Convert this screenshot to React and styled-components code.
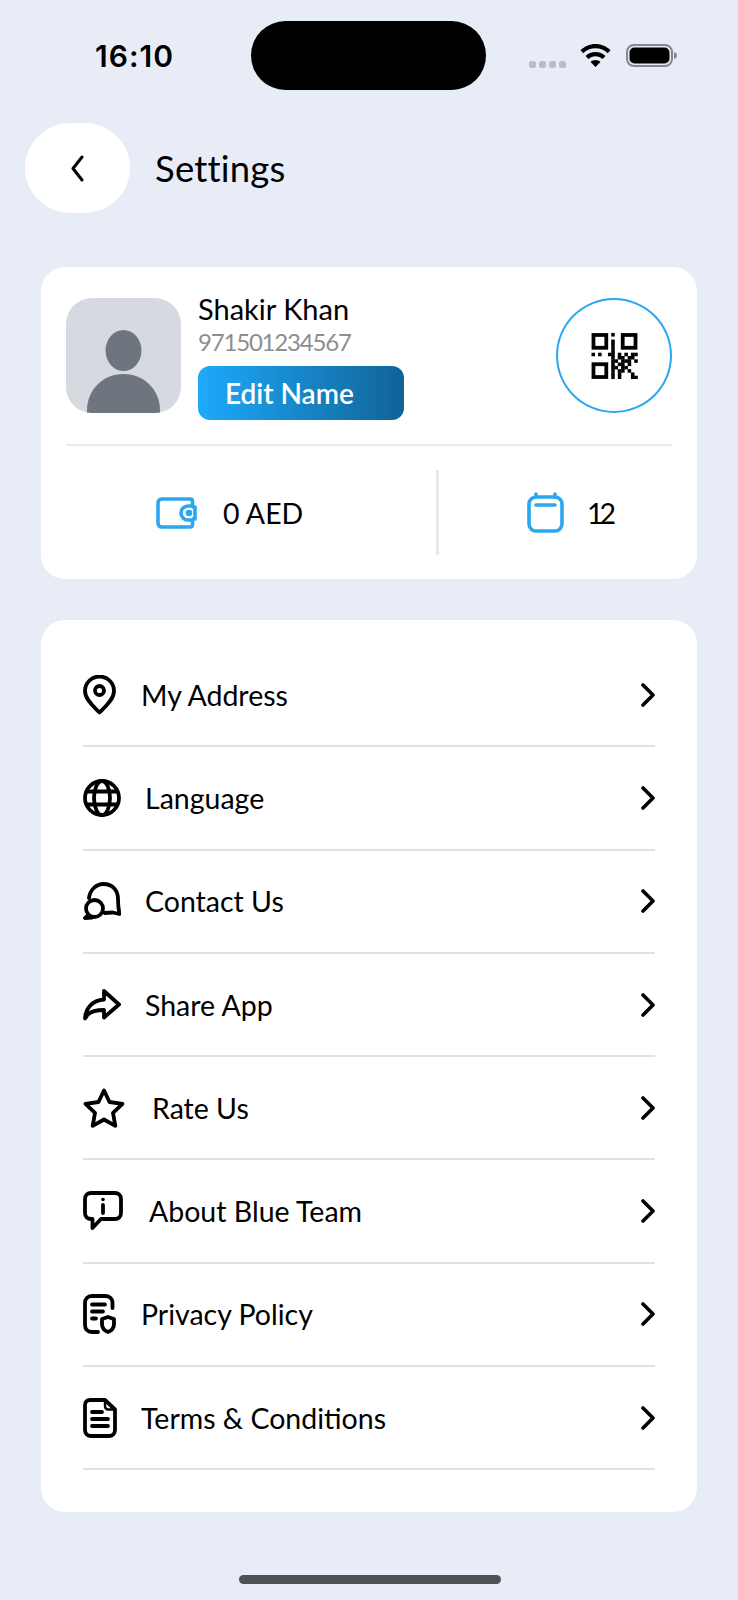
import React from "react";
import styled, { createGlobalStyle } from "styled-components";

const GlobalStyle = createGlobalStyle`
  html, body {
    margin: 0;
    padding: 0;
    background: #e7ecf7;
  }
  * {
    box-sizing: border-box;
  }
`;

const Page = styled.div`
  position: relative;
  width: 738px;
  height: 1600px;
  overflow: hidden;
  background: #e7ecf7;
  font-family: Lato, "Noto Sans", sans-serif;
  color: #000;
`;

const StatusBar = styled.div`
  display: flex;
  align-items: center;
  height: 69px;
  margin-top: 21px;
  padding-left: 95px;
`;

const Time = styled.div`
  width: 156px;
  font-family: Inter, sans-serif;
  font-size: 30px;
  font-weight: 600;
  letter-spacing: 1px;
`;

const Island = styled.div`
  width: 235px;
  height: 69px;
  border-radius: 35px;
  background: #000;
`;

const StatusIcons = styled.div`
  display: flex;
  align-items: center;
  height: 24px;
  margin-left: 43px;
`;

const DotsSlot = styled.div`
  display: flex;
  align-self: flex-end;
  margin-right: 14px;
`;

const WifiSlot = styled.div`
  display: flex;
  margin-right: 15px;
`;

const Header = styled.div`
  display: flex;
  align-items: center;
  gap: 25px;
  margin-top: 33px;
  padding-left: 25px;
`;

const BackButton = styled.div`
  display: flex;
  align-items: center;
  justify-content: center;
  width: 105px;
  height: 90px;
  border-radius: 45px;
  background: #fff;
`;

const Title = styled.div`
  font-size: 36.5px;
  letter-spacing: 0.2px;
`;

const Card = styled.div`
  margin: ${(p) => p.$top}px 41px 0;
  background: #fff;
  border-radius: 24px;
`;

const ProfileCard = styled(Card)`
  height: 312px;
  padding: 31px 25px 0;
`;

const ProfileTop = styled.div`
  display: flex;
  height: 148px;
  border-bottom: 2px solid #e9ebef;
`;

const Avatar = styled.div`
  width: 115px;
  height: 115px;
  border-radius: 26px;
  background: #d6dae0;
  overflow: hidden;
  flex: none;
`;

const ProfileInfo = styled.div`
  display: flex;
  flex-direction: column;
  align-items: flex-start;
  margin-left: 17px;
  flex: 1;
`;

const Name = styled.div`
  font-size: 29px;
  line-height: 26px;
  margin-top: -2px;
`;

const Phone = styled.div`
  font-size: 24px;
  line-height: 28px;
  margin-top: 6px;
  letter-spacing: -1.2px;
  color: #8e8e8e;
`;

const EditButton = styled.div`
  display: flex;
  align-items: center;
  width: 206px;
  height: 54px;
  margin-top: 10px;
  padding-left: 27px;
  border-radius: 12px;
  background: linear-gradient(90deg, #1fa9fb 0%, #0f6397 100%);
  color: #fff;
  font-size: 28px;
  font-weight: 600;
`;

const QrCircle = styled.div`
  display: flex;
  align-items: center;
  justify-content: center;
  width: 116px;
  height: 115px;
  border: 2px solid #2aa7ef;
  border-radius: 50%;
  flex: none;
`;

const Stats = styled.div`
  display: flex;
  align-items: center;
  height: 85px;
  margin-top: 24px;
`;

const Stat = styled.div`
  display: flex;
  align-items: center;
  gap: ${(p) => p.$gap}px;
  height: 100%;
  width: ${(p) => p.$width}px;
  padding-left: ${(p) => p.$pad}px;
  font-size: 28.5px;
  letter-spacing: ${(p) => (p.$right ? "-4px" : "0")};
  border-right: ${(p) => (p.$right ? "none" : "3px solid #e6e8ec")};
`;

const MenuCard = styled(Card)`
  height: 892px;
  padding: 24px 42px 0;
`;

const Row = styled.div`
  display: flex;
  align-items: center;
  height: 103.3px;
  border-bottom: 2px solid #dfe1e5;
  font-size: 28.5px;
  gap: ${(p) => p.$gap}px;
`;

const RowLabel = styled.div`
  flex: 1;
`;

const HomeBar = styled.div`
  position: absolute;
  left: 239px;
  bottom: 16px;
  width: 262px;
  height: 9px;
  border-radius: 5px;
  background: #505154;
`;

const Ico = ({ w, h, children }) => (
  <svg
    width={w}
    height={h}
    viewBox={`0 0 ${w} ${h}`}
    fill="none"
    stroke="#000"
    strokeWidth="3.8"
    strokeLinecap="round"
    strokeLinejoin="round"
    style={{ flex: "none" }}
  >
    {children}
  </svg>
);

const PinIcon = () => (
  <Ico w={33} h={40}>
    <path d="M16.5 37.5C11 32 2 24.5 2 16a14.5 14.5 0 0 1 29 0c0 8.5-9 16-14.5 21.5Z" />
    <circle cx="16.5" cy="15.5" r="4.5" />
  </Ico>
);

const GlobeIcon = () => (
  <Ico w={38} h={38}>
    <circle cx="19" cy="19" r="17" />
    <ellipse cx="19" cy="19" rx="8" ry="17" />
    <path d="M4 12.5h30M4 25.5h30" />
  </Ico>
);

const ChatIcon = () => (
  <Ico w={38} h={38}>
    <path d="M6 16C7 8 13 2 20.5 2 29.5 2 35 8.500 35 17c0 5 .5 10 1.500 15l-7-1.500-8 .5" />
    <circle cx="11.500" cy="26.500" r="8.500" />
    <path d="M5 33l-3 3 7-.5" />
  </Ico>
);

const ShareIcon = () => (
  <Ico w={38} h={32}>
    <path d="M21 2l15 13.500L21 28.500V21c-7 0-12.500 1-16 4.500-1 1-2 3-3 4 .5-10 7-18 19-19V2Z" />
  </Ico>
);

const StarIcon = () => (
  <Ico w={42} h={40}>
    <path d="M21 2.500l5.500 11.500 13 1.800-9.500 9 2.300 13L21 31.500 9.700 37.800l2.300-13-9.500-9 13-1.800L21 2.500Z" />
  </Ico>
);

const InfoIcon = () => (
  <Ico w={40} h={40}>
    <path d="M8 2h24c3.500 0 6 2.500 6 6v14c0 3.500-2.500 6-6 6H18l-8.500 9v-9H8c-3.500 0-6-2.500-6-6V8c0-3.500 2.500-6 6-6Z" />
    <path d="M20 14v8" />
    <circle cx="20" cy="8.500" r="1.800" fill="#000" stroke="none" />
  </Ico>
);

const PolicyIcon = () => (
  <Ico w={34} h={40}>
    <path d="M29.500 14V9c0-4-2.500-7-7-7H9C4.500 2 2 5 2 9v22c0 4 2.500 7 7 7h6" />
    <path d="M9 10.500h13M9 17.500h11M9 24.500h4" />
    <path d="M25 38c-4-1.500-6-4-6-8v-5l6-2 6 2v5c0 4-2 6.500-6 8Z" />
  </Ico>
);

const TermsIcon = () => (
  <Ico w={34} h={40}>
    <path d="M7 2h15l10 9.500V32c0 3.500-2.500 6-6 6H8c-3.500 0-6-2.500-6-6V7c0-3 2-5 5-5Z" />
    <path d="M22 3v5c0 2 1.500 3.500 3.500 3.500H31" strokeWidth="2.400" />
    <path d="M9 14h10M9 21h16M9 28h16" />
  </Ico>
);

const ArrowRight = () => (
  <svg width="14" height="24" viewBox="0 0 14 24" fill="none" stroke="#000" strokeWidth="3.6" strokeLinecap="round" strokeLinejoin="round">
    <path d="M2 2l10 10L2 22" />
  </svg>
);

const ArrowLeft = () => (
  <svg width="13" height="27" viewBox="0 0 13 27" fill="none" stroke="#000" strokeWidth="3" strokeLinecap="round" strokeLinejoin="round">
    <path d="M11 2L2 13.500 11 25" />
  </svg>
);

const WalletIcon = () => (
  <svg width="41" height="32" viewBox="0 0 41 32" fill="none" stroke="#2aa7ef" strokeWidth="3.6" strokeLinejoin="round">
    <path d="M6 2h28c1.500 0 2.500 1 2.500 2.500V9H32a7 7 0 0 0 0 14h4.500v4.500c0 1.500-1 2.500-2.500 2.500H6c-2.500 0-4-1.500-4-4V6c0-2.500 1.500-4 4-4Z" />
    <circle cx="33" cy="16" r="1.500" fill="#2aa7ef" />
    <path d="M36 10h3v12h-3" />
  </svg>
);

const CalendarIcon = () => (
  <svg width="37" height="41" viewBox="0 0 37 41" fill="none" stroke="#2aa7ef" strokeWidth="3.6" strokeLinecap="round">
    <rect x="2" y="5" width="33" height="34" rx="7" />
    <path d="M9 2v3M28 2v3M9 13h19" />
  </svg>
);

// 14x14 module grid, read off the reference; the three corner squares are drawn as rings
const qrRows = [
  "......#.......",
  "..............",
  "......#.......",
  "......#.......",
  "......#.......",
  "......#.......",
  "#.#..##.#.#.##",
  "......#.##.##.",
  "......##.###.#",
  "......#.##.#..",
  "......##.##...",
  "......#.##.#..",
  "......#.#...#.",
  "......#.#...##",
];

const QrIcon = () => (
  <svg width="47" height="46" viewBox="0 0 14 14" fill="#000">
    <g fill="none" stroke="#000" strokeWidth="1.150">
      <rect x="0.600" y="0.600" width="3.900" height="3.900" />
      <rect x="9.500" y="0.600" width="3.900" height="3.900" />
      <rect x="0.600" y="9.500" width="3.900" height="3.900" />
    </g>
    {qrRows.flatMap((row, y) =>
      row.split("").map((cell, x) =>
        cell === "#" ? <rect key={`${x}-${y}`} x={x} y={y} width="1.080" height="1.080" /> : null
      )
    )}
  </svg>
);

const AvatarFigure = () => (
  <svg width="115" height="115" viewBox="0 0 115 115">
    <ellipse cx="57.500" cy="52.500" rx="18" ry="20.500" fill="#6e757e" />
    <path d="M21 115v-3c0-20 16-36 36.500-36S94 92 94 112v3Z" fill="#6e757e" />
  </svg>
);

const WifiIcon = () => (
  <svg width="31" height="24" viewBox="0 0 30 24" fill="#000">
    <path d="M15 0C9 0 4 2.500 0 6.200l2.800 3C6 6.200 10.300 4.300 15 4.300s9 1.900 12.200 4.900l2.800-3C26 2.500 21 0 15 0Z" />
    <path d="M15 8c-3.900 0-7.400 1.600-10 4l2.900 3c1.900-1.700 4.400-2.800 7.100-2.800s5.200 1.100 7.100 2.800l2.900-3c-2.600-2.400-6.100-4-10-4Z" />
    <path d="M15 16c-1.900 0-3.600.7-4.900 1.900L15 23l4.900-5.100C18.600 16.700 16.900 16 15 16Z" />
  </svg>
);

const CellDots = () => (
  <svg width="37" height="7" viewBox="0 0 37 7" fill="#b9bdc6">
    <rect x="0" y="0" width="7" height="7" rx="2.500" />
    <rect x="10" y="0" width="7" height="7" rx="2.500" />
    <rect x="20" y="0" width="7" height="7" rx="2.500" />
    <rect x="30" y="0" width="7" height="7" rx="2.500" />
  </svg>
);

const BatteryIcon = () => (
  <svg width="51" height="23" viewBox="0 0 51 23">
    <rect x="1" y="1" width="45" height="21" rx="7" fill="none" stroke="#84878d" strokeWidth="2" />
    <rect x="3.500" y="3.500" width="40" height="16" rx="5" fill="#000" />
    <path d="M48 8c1.800.5 3 2 3 3.500S49.800 14.500 48 15Z" fill="#84878d" />
  </svg>
);

const items = [
  { label: "My Address", icon: <PinIcon />, gap: 25 },
  { label: "Language", icon: <GlobeIcon />, gap: 24 },
  { label: "Contact Us", icon: <ChatIcon />, gap: 24 },
  { label: "Share App", icon: <ShareIcon />, gap: 24 },
  { label: "Rate Us", icon: <StarIcon />, gap: 27 },
  { label: "About Blue Team", icon: <InfoIcon />, gap: 26 },
  { label: "Privacy Policy", icon: <PolicyIcon />, gap: 24 },
  { label: "Terms & Conditions", icon: <TermsIcon />, gap: 24 },
];

export default function App() {
  return (
    <Page>
      <GlobalStyle />
      <StatusBar>
        <Time>16:10</Time>
        <Island />
        <StatusIcons>
          <DotsSlot>
            <CellDots />
          </DotsSlot>
          <WifiSlot>
            <WifiIcon />
          </WifiSlot>
          <BatteryIcon />
        </StatusIcons>
      </StatusBar>

      <Header>
        <BackButton>
          <ArrowLeft />
        </BackButton>
        <Title>Settings</Title>
      </Header>

      <ProfileCard $top={54}>
        <ProfileTop>
          <Avatar>
            <AvatarFigure />
          </Avatar>
          <ProfileInfo>
            <Name>Shakir Khan</Name>
            <Phone>971501234567</Phone>
            <EditButton>Edit Name</EditButton>
          </ProfileInfo>
          <QrCircle>
            <QrIcon />
          </QrCircle>
        </ProfileTop>
        <Stats>
          <Stat $width={373} $pad={90} $gap={26}>
            <WalletIcon />
            0 AED
          </Stat>
          <Stat $right $width={233} $pad={88} $gap={23}>
            <CalendarIcon />
            12
          </Stat>
        </Stats>
      </ProfileCard>

      <MenuCard $top={41}>
        {items.map((item) => (
          <Row key={item.label} $gap={item.gap}>
            {item.icon}
            <RowLabel>{item.label}</RowLabel>
            <ArrowRight />
          </Row>
        ))}
      </MenuCard>

      <HomeBar />
    </Page>
  );
}
